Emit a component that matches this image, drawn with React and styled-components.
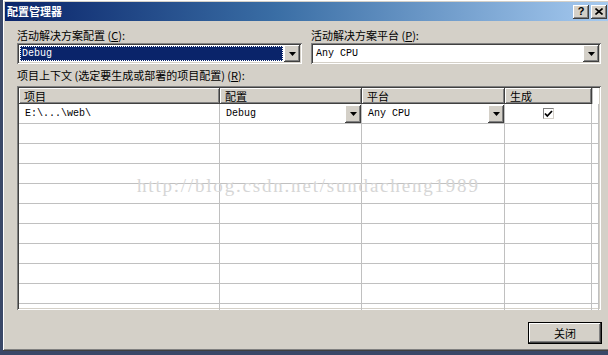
import React from 'react';
import styled, { createGlobalStyle } from 'styled-components';

const GlobalStyle = createGlobalStyle`
  html, body {
    margin: 0;
    padding: 0;
    background: #3a4868;
    overflow: hidden;
  }
  * {
    box-sizing: border-box;
  }
`;

const cjk = `"Noto Sans CJK SC", "Liberation Sans", sans-serif`;
const mono = `"Liberation Mono", "DejaVu Sans Mono", monospace`;

const raised = `
  box-shadow: inset -1px -1px #404040, inset 1px 1px #ffffff,
    inset -2px -2px #808080, inset 2px 2px #d4d0c8;
`;

const sunken = `
  box-shadow: inset 1px 1px #808080, inset -1px -1px #ffffff,
    inset 2px 2px #404040, inset -2px -2px #d4d0c8;
`;

const cols = '201px 142px 143px 87px 1fr';

const Desktop = styled.div`
  width: 608px;
  height: 355px;
  padding: 0 3px 4px 3px;
  display: flex;
  background: #3a4868;
`;

const Window = styled.div`
  flex: 1;
  display: flex;
  flex-direction: column;
  padding: 2px;
  background: #d4d0c8;
  ${raised}
`;

const TitleBar = styled.div`
  height: 19px;
  display: flex;
  align-items: center;
  justify-content: space-between;
  padding: 0 2px;
  background: linear-gradient(to right, #0a246a 0%, #3a6ea5 45%, #a6caf0 100%);
`;

const Title = styled.span`
  font-family: ${cjk};
  font-size: 11px;
  font-weight: bold;
  color: #ffffff;
  line-height: 19px;
`;

const TitleButtons = styled.div`
  display: flex;
  gap: 2px;
`;

const CaptionButton = styled.div`
  width: 16px;
  height: 14px;
  display: flex;
  align-items: center;
  justify-content: center;
  background: #d4d0c8;
  font-family: "Liberation Sans", sans-serif;
  font-weight: bold;
  font-size: 11px;
  color: #000;
  padding-bottom: 1px;
  ${raised}
`;

const Body = styled.div`
  flex: 1;
  display: flex;
  flex-direction: column;
  padding: 8px 8px 5px 12px;
`;

const TopRow = styled.div`
  display: grid;
  grid-template-columns: 285px 1fr;
  column-gap: 9px;
`;

const Field = styled.div`
  display: flex;
  flex-direction: column;
  gap: 1px;
`;

const Label = styled.div`
  font-family: ${cjk};
  font-size: 11px;
  line-height: 13px;
  height: 13px;
  color: #000;
  margin-top: ${p => p.$mt || 0}px;
  u {
    text-decoration: underline;
  }
`;

const Combo = styled.div`
  height: 21px;
  display: flex;
  align-items: stretch;
  padding: 2px;
  background: #ffffff;
  ${sunken}
`;

const ComboValue = styled.div`
  flex: 1;
  display: flex;
  align-items: center;
  margin: 1px;
  padding-left: 2px;
  font-family: ${mono};
  font-size: 10px;
  color: ${p => (p.$selected ? '#ffffff' : '#000000')};
  background: ${p => (p.$selected ? '#0a246a' : 'transparent')};
  outline: ${p => (p.$selected ? '1px dotted #ffffff' : 'none')};
  outline-offset: -1px;
`;

const DropButton = styled.div`
  width: 16px;
  flex: none;
  display: flex;
  align-items: center;
  justify-content: center;
  background: #d4d0c8;
  ${raised}
`;

const Arrow = () => (
  <svg width="7" height="4" viewBox="0 0 7 4">
    <path d="M0 0h7L3.5 4z" fill="#000" />
  </svg>
);

const Table = styled.div`
  position: relative;
  margin-top: 4px;
  height: 224px;
  padding: 2px;
  background: #ffffff;
  overflow: hidden;
  display: flex;
  flex-direction: column;
  ${sunken}
`;

const HeaderRow = styled.div`
  flex: none;
  display: grid;
  grid-template-columns: ${cols};
  height: 16px;
`;

const Row = styled.div`
  flex: none;
  display: grid;
  grid-template-columns: ${cols};
  height: 20px;
`;

const HeadCell = styled.div`
  font-family: ${cjk};
  font-size: 11px;
  line-height: 16px;
  padding-left: 5px;
  color: #000;
  background: #d4d0c8;
  box-shadow: inset -1px -1px #404040, inset 1px 1px #ffffff,
    inset -2px -2px #808080;
`;

const HeadFiller = styled.div`
  background: #ffffff;
  border-left: 1px solid #c0c0c0;
`;

const Cell = styled.div`
  display: flex;
  align-items: center;
  justify-content: ${p => (p.$center ? 'center' : 'flex-start')};
  padding-left: ${p => (p.$center ? 0 : 6)}px;
  border-right: 1px solid #c0c0c0;
  border-bottom: 1px solid #c0c0c0;
  font-family: ${mono};
  font-size: 10px;
  color: #000;
`;

const CellText = styled.span`
  flex: 1;
`;

const CellButton = styled(DropButton)`
  height: 18px;
  align-self: flex-start;
  margin-top: 1px;
`;

const Check = styled.div`
  width: 11px;
  height: 11px;
  display: flex;
  align-items: center;
  justify-content: center;
  background: #ffffff;
  border: 1px solid #808080;
  border-right-color: #d4d0c8;
  border-bottom-color: #d4d0c8;
`;

const Watermark = styled.div`
  position: absolute;
  left: 120px;
  top: 89px;
  font-family: "Liberation Serif", serif;
  font-size: 19px;
  letter-spacing: 1.8px;
  color: #d6d6d6;
  pointer-events: none;
  white-space: nowrap;
`;

const Footer = styled.div`
  margin-top: 12px;
  display: flex;
  justify-content: flex-end;
  margin-right: -1px;
`;

const CloseButton = styled.div`
  width: 74px;
  height: 22px;
  display: flex;
  align-items: center;
  justify-content: center;
  border: 1px solid #000;
  background: #d4d0c8;
  font-family: ${cjk};
  font-size: 11px;
  color: #000;
  box-shadow: inset -1px -1px #404040, inset 1px 1px #ffffff,
    inset -2px -2px #808080;
`;

const columns = ['项目', '配置', '平台', '生成'];
const emptyRows = Array.from({ length: 10 });

export default function App() {
  return (
    <>
      <GlobalStyle />
      <Desktop>
        <Window>
          <TitleBar>
            <Title>配置管理器</Title>
            <TitleButtons>
              <CaptionButton>?</CaptionButton>
              <CaptionButton>
                <svg width="8" height="7" viewBox="0 0 8 7">
                  <path d="M0.5 0.5l7 6M7.5 0.5l-7 6" stroke="#000" strokeWidth="1.6" />
                </svg>
              </CaptionButton>
            </TitleButtons>
          </TitleBar>
          <Body>
            <TopRow>
              <Field>
                <Label>活动解决方案配置 (<u>C</u>):</Label>
                <Combo>
                  <ComboValue $selected>Debug</ComboValue>
                  <DropButton><Arrow /></DropButton>
                </Combo>
              </Field>
              <Field>
                <Label>活动解决方案平台 (<u>P</u>):</Label>
                <Combo>
                  <ComboValue>Any CPU</ComboValue>
                  <DropButton><Arrow /></DropButton>
                </Combo>
              </Field>
            </TopRow>
            <Label $mt={5}>项目上下文 (选定要生成或部署的项目配置) (<u>R</u>):</Label>
            <Table>
              <HeaderRow>
                {columns.map(c => (
                  <HeadCell key={c}>{c}</HeadCell>
                ))}
                <HeadFiller />
              </HeaderRow>
              <Row>
                <Cell>E:\...\web\</Cell>
                <Cell>
                  <CellText>Debug</CellText>
                  <CellButton><Arrow /></CellButton>
                </Cell>
                <Cell>
                  <CellText>Any CPU</CellText>
                  <CellButton><Arrow /></CellButton>
                </Cell>
                <Cell $center>
                  <Check>
                    <svg width="9" height="8" viewBox="0 0 9 8">
                      <path d="M1 3.5l2.3 2.5L8 1" stroke="#000" strokeWidth="1.8" fill="none" />
                    </svg>
                  </Check>
                </Cell>
                <Cell />
              </Row>
              {emptyRows.map((_, i) => (
                <Row key={i}>
                  <Cell />
                  <Cell />
                  <Cell />
                  <Cell />
                  <Cell />
                </Row>
              ))}
              <Watermark>http://blog.csdn.net/sundacheng1989</Watermark>
            </Table>
            <Footer>
              <CloseButton>关闭</CloseButton>
            </Footer>
          </Body>
        </Window>
      </Desktop>
    </>
  );
}
